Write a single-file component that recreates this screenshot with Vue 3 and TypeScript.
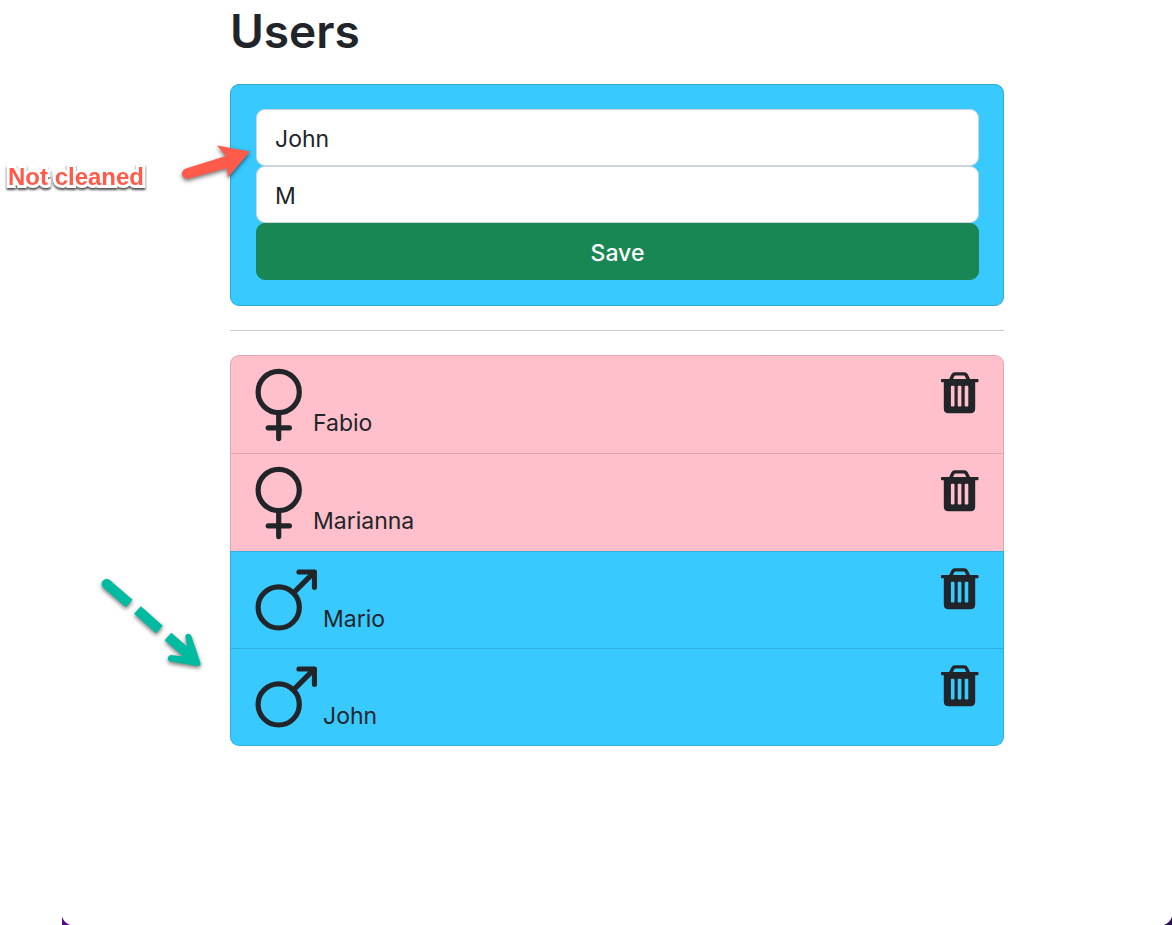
<script setup lang="ts">
import { ref } from 'vue'

type Gender = 'F' | 'M'

interface User {
  id: number
  name: string
  gender: Gender
}

const name = ref('John')
const gender = ref('M')
const users = ref<User[]>([
  { id: 1, name: 'Fabio', gender: 'F' },
  { id: 2, name: 'Marianna', gender: 'F' },
  { id: 3, name: 'Mario', gender: 'M' },
  { id: 4, name: 'John', gender: 'M' },
])

function save() {
  users.value.push({
    id: Date.now(),
    name: name.value,
    gender: gender.value === 'F' ? 'F' : 'M',
  })
}

function remove(id: number) {
  users.value = users.value.filter((user) => user.id !== id)
}
</script>

<template>
  <div class="page">
    <main class="container">
      <h1>Users</h1>

      <form class="card" @submit.prevent="save">
        <input v-model="name" class="field" type="text" aria-label="Name" />
        <input v-model="gender" class="field" type="text" aria-label="Gender" />
        <button class="save" type="submit">Save</button>
      </form>

      <hr />

      <ul class="list">
        <li v-for="user in users" :key="user.id" class="item" :class="user.gender === 'F' ? 'female' : 'male'">
          <svg v-if="user.gender === 'F'" class="symbol venus" viewBox="0 0 52 74" aria-hidden="true">
            <circle cx="23.7" cy="24" r="20.6" />
            <path d="M23.7 45V70.6M13.2 59.8H34.4" />
          </svg>
          <svg v-else class="symbol mars" viewBox="0 0 62 74" aria-hidden="true">
            <circle cx="23.7" cy="43.4" r="20.6" />
            <path d="M38.5 28.9L59 8.4" />
            <path d="M44 8H59.5V23.3" />
          </svg>
          <span class="name">{{ user.name }}</span>
          <button class="trash" type="button" :aria-label="`Delete ${user.name}`" @click="remove(user.id)">
            <svg viewBox="0 0 38 42" aria-hidden="true">
              <path
                fill-rule="evenodd"
                d="M0.8 7H8.2L10.3 2.5Q11.5 0.3 13.9 0.3H23.3Q25.7 0.3 26.9 2.5L29 7H36.7Q37.5 7 37.5 8V9.2Q37.5 10.2 36.7 10.2H34.2V36.6Q34.2 41.3 29.4 41.3H7.6Q2.8 41.3 2.8 36.6V10.2H0.8Q0 10.2 0 9.2V8Q0 7 0.8 7ZM12 7H25.2L23.9 4.2Q23.6 3.5 22.8 3.5H14.4Q13.6 3.5 13.3 4.2ZM10.9 13.8Q9.9 13.8 9.9 14.8V33.4Q9.9 34.4 10.9 34.4H12.5Q13.5 34.4 13.5 33.4V14.8Q13.5 13.8 12.5 13.8ZM17.7 13.8Q16.7 13.8 16.7 14.8V33.4Q16.7 34.4 17.7 34.4H19.4Q20.4 34.4 20.4 33.4V14.8Q20.4 13.8 19.4 13.8ZM24.7 13.8Q23.7 13.8 23.7 14.8V33.4Q23.7 34.4 24.7 34.4H26.3Q27.3 34.4 27.3 33.4V14.8Q27.3 13.8 26.3 13.8Z"
              />
            </svg>
          </button>
        </li>
      </ul>
    </main>

    <span class="note">Not cleaned</span>
    <svg class="red-arrow" viewBox="0 0 80 50" aria-hidden="true">
      <path d="M6 28.5L46 16L37 5.5L70 11.5L48 37.5L47 28L9 38.5Q4 39.5 2 35Q1.5 30.5 6 28.5Z" />
    </svg>
    <svg class="green-arrow" viewBox="0 0 120 110" aria-hidden="true">
      <path class="dash" d="M16.7 19L39.3 38.5M47.5 45L69.5 64.5M78 71.5L98 89" />
      <circle cx="16.7" cy="19" r="5" />
      <path class="head" d="M95.5 71.5Q95.5 68.8 98.3 68.8Q101 69 101.5 71.5L110.5 98Q111 101 108 101L80 96.5Q77.5 95.5 78 92.5Q78.5 90 81 90L94 91.5L98 88Z" />
    </svg>
    <span class="corner left"></span>
    <span class="corner right"></span>
  </div>
</template>

<style>
body {
  margin: 0;
  background: #fff;
}
</style>

<style scoped>
.page {
  position: relative;
  box-sizing: border-box;
  min-height: 100vh;
  padding: 0 0 24px 62px;
  overflow: hidden;
  color: #212529;
  font-family: Inter, "Liberation Sans", sans-serif;
  font-size: 23px;
  line-height: 36px;
}

.container {
  max-width: 774px;
  margin: 0 auto;
}

h1 {
  margin: 0;
  padding-bottom: 22px;
  font-size: 46px;
  font-weight: 600;
  line-height: 62px;
}

.card {
  display: flex;
  flex-direction: column;
  padding: 24px 24px 25px 25px;
  border: 1px solid #2fa9d6;
  border-radius: 9px;
  background: #38caff;
}

.field,
.save {
  box-sizing: border-box;
  width: 100%;
  height: 57px;
  margin: 0;
  padding: 2px 18px 0;
  border: 1px solid #ced4da;
  border-radius: 9px;
  background: #fff;
  color: inherit;
  font: inherit;
}

.save {
  border-color: #198754;
  background: #198754;
  color: #fff;
  font-weight: 500;
  cursor: pointer;
}

hr {
  height: 1px;
  margin: 24px 0;
  border: 0;
  background: #c8c9ca;
}

.list {
  display: grid;
  grid-auto-rows: 1fr;
  box-sizing: border-box;
  min-height: 391px;
  margin: 0;
  padding: 0;
  list-style: none;
}

.item {
  display: flex;
  align-items: flex-start;
  box-sizing: border-box;
  gap: 6px;
  padding: 12px 24px 0;
  border: 1px solid rgba(0, 0, 0, 0.125);
  border-bottom-width: 0;
}

.item:first-child {
  border-radius: 9px 9px 0 0;
}

.item:last-child {
  border-bottom-width: 1px;
  border-radius: 0 0 9px 9px;
}

.female {
  background: #ffc0cb;
}

.male {
  background: #38caff;
}

.symbol {
  flex: none;
  height: 74px;
  fill: none;
  stroke: #212529;
  stroke-width: 5.2;
  stroke-linecap: round;
  stroke-linejoin: round;
}

.venus {
  width: 52px;
}

.mars {
  width: 62px;
}

.name {
  flex: 1;
  padding-top: 37px;
}

.trash {
  flex: none;
  margin-top: 4px;
  padding: 0;
  border: 0;
  background: none;
  cursor: pointer;
}

.trash svg {
  display: block;
  width: 38px;
  height: 42px;
  fill: #212529;
}

.note {
  position: absolute;
  top: 162px;
  left: 8px;
  color: #ff5a4a;
  font-family: "Liberation Sans", Arial, sans-serif;
  font-size: 24px;
  font-weight: 700;
  line-height: 30px;
  -webkit-text-stroke: 6px #fff;
  paint-order: stroke fill;
  filter: drop-shadow(0 2px 1px rgba(0, 0, 0, 0.7));
}

.red-arrow {
  position: absolute;
  top: 140px;
  left: 180px;
  width: 80px;
  height: 50px;
  fill: #ff5a4a;
  filter: drop-shadow(0 2px 2px rgba(0, 0, 0, 0.55));
}

.green-arrow {
  position: absolute;
  top: 565px;
  left: 90px;
  width: 120px;
  height: 110px;
  fill: #00bba0;
  filter: drop-shadow(0 2px 2px rgba(0, 0, 0, 0.55));
}

.dash {
  fill: none;
  stroke: #00bba0;
  stroke-width: 10;
}

.corner {
  position: absolute;
  bottom: 0;
  width: 12px;
  height: 12px;
}

.left {
  left: 62px;
  background: radial-gradient(circle at 12px 0, transparent 12px, #5b0a86 13px);
}

.right {
  right: 0;
  background: radial-gradient(circle at 0 0, transparent 12px, #24104f 13px);
}
</style>
